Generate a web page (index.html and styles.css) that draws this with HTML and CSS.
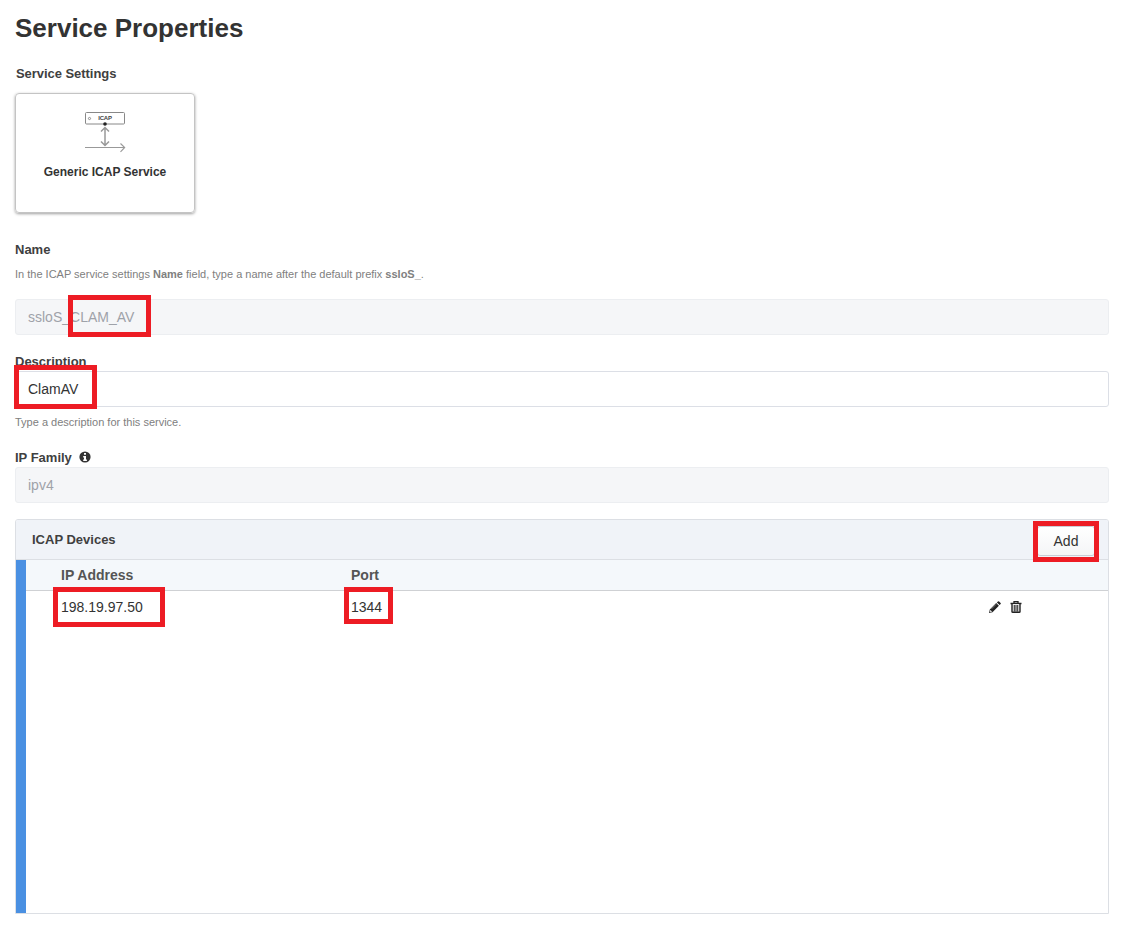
FILE: index.html
```html
<!DOCTYPE html>
<html lang="en">
<head>
<meta charset="utf-8">
<title>Service Properties</title>
<link rel="stylesheet" href="styles.css">
</head>
<body>
<main class="page">
  <h1 class="title">Service Properties</h1>
  <h2 class="label settings-label">Service Settings</h2>
  <div class="service-card">
    <svg class="service-icon" width="42" height="42" viewBox="0 0 42 42" fill="none">
      <rect x="1.5" y="1.5" width="39" height="11.5" rx="1" stroke="#888"/>
      <circle cx="5.5" cy="7.5" r="1.1" stroke="#777" stroke-width=".8"/>
      <text class="icon-text" x="21" y="9.4" text-anchor="middle">ICAP</text>
      <circle cx="21" cy="13" r="1.8" fill="#222"/>
      <path d="M21 17V34M17 20.5L21 16.5L25 20.5M17 30.5L21 34.5L25 30.5" stroke="#999" stroke-width="1.5"/>
      <path d="M1 36.5H41M36.5 32.5L40.7 36.5L36.5 40.8" stroke="#999" stroke-width="1.1"/>
    </svg>
    <span class="service-name">Generic ICAP Service</span>
  </div>

  <section class="field name-field">
    <div class="label">Name</div>
    <p class="help name-help">In the ICAP service settings <b>Name</b> field, type a name after the default prefix <b>ssloS_</b>.</p>
    <div class="input disabled">ssloS_CLAM_AV</div>
  </section>
  <section class="field description-field">
    <div class="label">Description</div>
    <div class="input">ClamAV</div>
    <p class="help">Type a description for this service.</p>
  </section>
  <section class="field family-field">
    <div class="label">IP Family
      <svg class="info" width="12" height="12" viewBox="0 0 12 12"><circle cx="6" cy="6" r="5.6" fill="#333"/><path d="M5 2h2v1.7H5zM4.2 5H7v3.5h.9V10H4.2V8.5H5V6.4h-.8z" fill="#fff"/></svg>
    </div>
    <div class="input disabled">ipv4</div>
  </section>

  <section class="devices">
    <header class="devices-header">
      <span class="label">ICAP Devices</span>
      <button class="add">Add</button>
    </header>
    <div class="devices-body">
      <div class="row head"><span>IP Address</span><span>Port</span></div>
      <div class="row">
        <span>198.19.97.50</span><span>1344</span>
        <div class="actions">
          <svg width="12" height="12" viewBox="0 0 12 12"><path d="M0 12L.8 8.5L7.2 2.1L9.9 4.8L3.5 11.2ZM7.9 1.4L8.9.4Q9.5-.1 10.1.4L11.6 1.9Q12.1 2.5 11.6 3.1L10.6 4.1Z" fill="#222"/><path d="M1.4 9.2L2.8 10.6L1.2 11ZM2.5 7.9L7.1 3.3" fill="#fff" stroke="#fff" stroke-width=".4"/></svg>
          <svg width="12" height="12" viewBox="0 0 12 12"><path d="M4 2V.7H8V2M.5 2.5H11.5" fill="none" stroke="#222" stroke-width="1.3"/><path d="M2 3V10.8Q2 11.3 2.8 11.3H9.2Q10 11.3 10 10.8V3" fill="#e8e8e8" stroke="#222" stroke-width="1.4"/><path d="M4.3 4V10.6M6 4V10.6M7.7 4V10.6" stroke="#222" stroke-width=".95"/></svg>
        </div>
      </div>
    </div>
  </section>

  <div class="mark mark-name"></div>
  <div class="mark mark-description"></div>
  <div class="mark mark-add"></div>
  <div class="mark mark-address"></div>
  <div class="mark mark-port"></div>
</main>
</body>
</html>
```
FILE: styles.css
```css
* { box-sizing: border-box; }
body { margin: 0; background: #fff; color: #333; font-family: "Liberation Sans", Arial, sans-serif; }
.page { position: relative; height: 927px; padding: 12px 23px 0 15px; overflow: hidden; }
.title { margin: 0; font-size: 26px; line-height: 32px; }
.label { margin: 0; font-size: 13px; line-height: 18px; font-weight: bold; color: #404040; }
.settings-label { margin-top: 21px; padding-left: 1px; letter-spacing: -.05px; }
.service-card { display: flex; flex-direction: column; align-items: center; width: 180px; height: 120px; margin-top: 10px; padding-top: 17px; border: 1px solid #c4c4c4; border-radius: 4px; box-shadow: 0 1px 3px rgba(0,0,0,.38); }
.service-icon { flex: none; }
.icon-text { font-size: 6px; font-weight: bold; fill: #444; letter-spacing: -.2px; }
.service-name { margin-top: 10px; font-size: 12px; line-height: 18px; font-weight: bold; }
.name-field { margin-top: 28px; }
.help { margin: 7px 0 0; font-size: 11px; line-height: 16px; color: #808080; }
.name-help { margin: 7px 0 17px; }
.input { height: 36px; padding: 0 12px; border: 1px solid #dcdfe6; border-radius: 3px; font-size: 14px; line-height: 34px; }
.disabled { background: #f5f6f8; border-color: #eceef1; color: #9fa2a9; }
.description-field { margin-top: 18px; }
.family-field { margin-top: 19px; }
.family-field .label { height: 18px; }
.info { margin-left: 4px; vertical-align: -1px; }
.devices { display: flex; flex-direction: column; height: 395px; margin-top: 16px; border: 1px solid #dcdfe4; border-radius: 3px 3px 0 0; }
.devices-header { display: flex; justify-content: space-between; height: 40px; padding: 6px 13px 0 16px; border-bottom: 1px solid #dcdfe4; background: #f0f3f8; border-radius: 2px 2px 0 0; }
.devices-header .label { line-height: 28px; }
.add { width: 58px; height: 30px; padding: 0; border: 1px solid #c9ced6; border-radius: 3px; background: linear-gradient(#fff, #f4f5f7); color: #333; font: 14px/28px "Liberation Sans", Arial, sans-serif; }
.devices-body { flex: 1; border-left: 10px solid #4a90e2; font-size: 14px; }
.row { display: grid; grid-template-columns: 290px 638px auto; align-items: center; height: 32px; padding-left: 35px; }
.head { height: 31px; border-bottom: 1px solid #cfd1d4; background: #f4f8fb; color: #555; font-weight: bold; }
.actions { display: flex; gap: 9px; }
.mark { position: absolute; border: 5px solid #ed1c24; }
.mark-name { left: 68px; top: 295px; width: 83px; height: 42px; }
.mark-description { left: 14px; top: 365px; width: 83px; height: 44px; }
.mark-add { left: 1033px; top: 521px; width: 66px; height: 41px; }
.mark-address { left: 53px; top: 587px; width: 112px; height: 40px; }
.mark-port { left: 344px; top: 587px; width: 49px; height: 37px; }
```
